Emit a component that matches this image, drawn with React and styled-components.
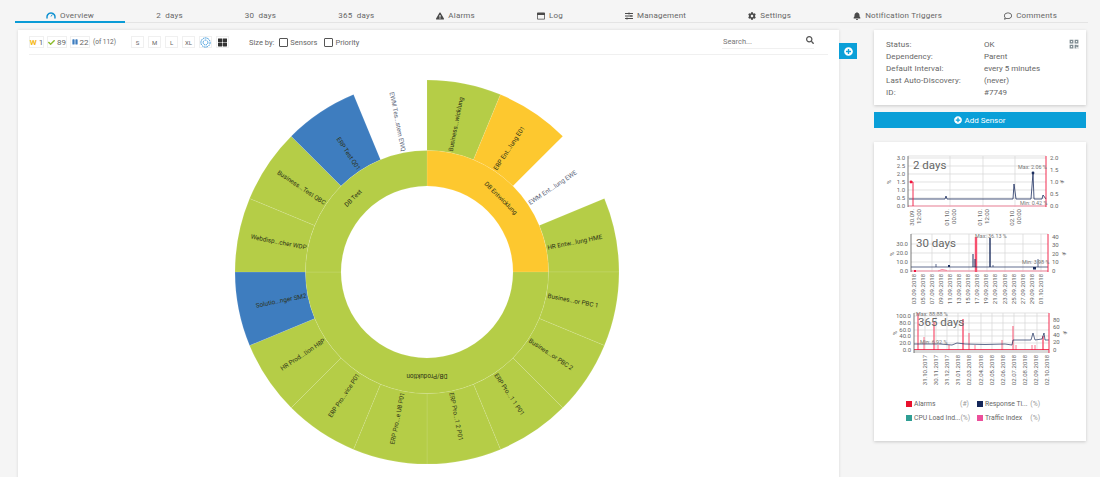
import React from 'react'
import styled, { createGlobalStyle } from 'styled-components'
import {
  FaExclamationTriangle,
  FaRegWindowMaximize,
  FaSlidersH,
  FaCog,
  FaBell,
  FaRegComment,
  FaSearch,
  FaPlusCircle,
  FaCheck,
  FaPause,
  FaThLarge,
  FaQrcode,
} from 'react-icons/fa'

const GlobalStyle = createGlobalStyle`
  html, body {
    margin: 0;
    background: #f5f5f5;
    font-family: Roboto, 'Liberation Sans', sans-serif;
  }
`

const Page = styled.div`
  width: 1100px;
  height: 477px;
  overflow: hidden;
  background: #f5f5f5;
`

const TabBar = styled.nav`
  display: flex;
  height: 22px;
  margin: 0 12px 0 15px;
  border-bottom: 1px solid #e4e4e4;
`

const Tab = styled.div`
  flex: 1 1 auto;
  display: flex;
  align-items: center;
  justify-content: center;
  gap: 4px;
  padding-top: 9px;
  height: 13px;
  font-size: 8px;
  letter-spacing: 0.2px;
  white-space: pre;
  color: #666;
  ${(p) => p.$active && 'border-bottom: 2px solid #0a9bd6; height: 12px;'}

  svg {
    font-size: 8px;
    color: #4a4a4a;
  }
`

const Content = styled.div`
  display: flex;
  align-items: flex-start;
  margin-top: 7px;
  padding-left: 18px;
`

const MainCard = styled.section`
  width: 821px;
  height: 520px;
  flex: none;
  background: #fff;
  box-shadow: 0 0 3px rgba(0, 0, 0, 0.12);
`

const Toolbar = styled.div`
  display: flex;
  align-items: center;
  height: 24px;
  margin: 0 11px;
  border-bottom: 1px solid #f0f0f0;
  font-size: 7.5px;
  color: #666;
`

const Badge = styled.span`
  display: flex;
  align-items: center;
  justify-content: center;
  gap: 2px;
  width: ${(p) => p.$w || 13}px;
  height: 12px;
  margin-right: ${(p) => p.$gap ?? 3}px;
  border: 1px solid #f0f0f0;
  font-size: ${(p) => p.$size || 7}px;
  color: #666;
  box-sizing: border-box;
`

const Count = styled.span`
  font-size: 8px;
  font-weight: ${(p) => (p.$bold ? 700 : 400)};
  color: ${(p) => p.$color || '#666'};
`

const OfTotal = styled.span`
  margin: 0 15px 0 3px;
  font-size: 6.5px;
  color: #666;
`

const SizeBy = styled.span`
  margin: 0 5px 0 20px;
`

const CheckLabel = styled.label`
  display: flex;
  align-items: center;
  gap: 2px;
  margin-right: 7px;
`

const Check = styled.input.attrs({ type: 'checkbox' })`
  appearance: none;
  width: 9px;
  height: 9px;
  margin: 0;
  border: 1px solid #555;
  border-radius: 1px;
  background: #fff;
`

const SearchBox = styled.div`
  display: flex;
  align-items: center;
  width: 92px;
  height: 13px;
  margin: 0 14px 0 auto;
  border-bottom: 1px solid #f0f0f0;

  svg {
    font-size: 8px;
    color: #555;
    margin-top: -3px;
  }
`

const SearchInput = styled.input`
  flex: 1;
  min-width: 0;
  padding: 0 0 0 1px;
  border: 0;
  outline: 0;
  background: transparent;
  font: 7.5px Roboto, sans-serif;

  &::placeholder {
    color: #777;
    opacity: 1;
  }
`

const Sunburst = styled.svg`
  display: block;
`

const SegmentLabel = styled.text`
  font-size: 6.3px;
  fill: ${(p) => (p.$light ? '#5a6478' : '#2d3216')};
`

const ToggleButton = styled.button`
  flex: none;
  display: flex;
  align-items: center;
  justify-content: center;
  width: 18px;
  height: 16px;
  margin-top: 13px;
  padding: 0;
  border: 0;
  background: #0a9fd8;
  color: #fff;
  font-size: 9px;
`

const SideColumn = styled.aside`
  flex: none;
  width: 212px;
  margin-left: 17px;
`

const InfoCard = styled.div`
  position: relative;
  height: 75px;
  padding: 8px 12px;
  box-sizing: border-box;
  background: #fff;
  box-shadow: 0 1px 3px rgba(0, 0, 0, 0.18);
  display: grid;
  grid-template-columns: 98px 1fr;
  grid-auto-rows: 12px;
  align-items: center;
  font-size: 8px;
  letter-spacing: 0.1px;
  color: #666;
`

const InfoValue = styled.span`
  letter-spacing: 0;
  white-space: nowrap;
`

const QrBadge = styled.span`
  position: absolute;
  top: 9px;
  right: 7px;
  font-size: 10px;
  line-height: 10px;
  color: #7d8a90;
`

const AddButton = styled.button`
  display: flex;
  align-items: center;
  justify-content: center;
  gap: 2px;
  width: 100%;
  height: 16px;
  margin-top: 7px;
  padding: 0;
  border: 0;
  background: #0a9fd8;
  color: #fff;
  font: 400 8px Roboto, sans-serif;
`

const GraphCard = styled.div`
  height: 299px;
  margin-top: 14px;
  padding-top: 9px;
  box-sizing: border-box;
  background: #fff;
  box-shadow: 0 1px 3px rgba(0, 0, 0, 0.18);
`

const ChartSvg = styled.svg`
  display: block;
  font-family: Roboto, sans-serif;
`

const Tick = styled.text`
  font-size: 6px;
  fill: #666;
`

const Note = styled.text`
  font-size: 5.4px;
  fill: #777;
`

const ChartTitle = styled.text`
  font-size: 11.5px;
  fill: #666;
`

const Legend = styled.div`
  display: grid;
  grid-template-columns: 71px 63px;
  grid-auto-rows: 14px;
  margin: 11px 0 0 32px;
  font-size: 6.8px;
  color: #666;
`

const LegendItem = styled.div`
  display: flex;
  align-items: center;
  white-space: nowrap;
`

const Swatch = styled.i`
  flex: none;
  width: 6px;
  height: 6px;
  margin-right: 2px;
  background: ${(p) => p.$color};
`

const LegendUnit = styled.span`
  margin-left: auto;
  margin-right: ${(p) => (p.$end ? 0 : 8)}px;
  color: #999;
`

// sunburst
const CX = 427
const CY = 272
const GREEN = '#b5cd47'
const YELLOW = '#fdc82f'
const BLUE = '#3e7dbf'

const polar = (r, deg) => {
  const a = (deg * Math.PI) / 180
  return [CX + r * Math.sin(a), CY - r * Math.cos(a)]
}

const arc = (r0, r1, from, to) => {
  const big = to - from > 180 ? 1 : 0
  const [x0, y0] = polar(r1, from)
  const [x1, y1] = polar(r1, to)
  const [x2, y2] = polar(r0, to)
  const [x3, y3] = polar(r0, from)
  return `M${x0} ${y0}A${r1} ${r1} 0 ${big} 1 ${x1} ${y1}L${x2} ${y2}A${r0} ${r0} 0 ${big} 0 ${x3} ${y3}Z`
}

const groups = [
  { name: 'DB Entwicklung', from: 0, to: 90, color: YELLOW, rot: 45 },
  { name: 'DB/Produktion', from: 90, to: 270, color: GREEN, rot: 180 },
  { name: 'DB Test', from: 270, to: 360, color: GREEN, rot: -45 },
]

const sensors = [
  ['Business...wicklung', GREEN],
  ['ERP Ent...lung E01', YELLOW],
  ['EWM Ent...lung EWE', null],
  ['HR Entw...lung HME', GREEN],
  ['Busines...or PBC 1', GREEN],
  ['Busines...or PBC 2', GREEN],
  ['ERP Pro...1 1 P01', GREEN],
  ['ERP Pro...1 2 P01', GREEN],
  ['ERP Pro...e U8 P01', GREEN],
  ['ERP Pro...vice P01', GREEN],
  ['HR Prod...tion H8P', GREEN],
  ['Solutio...nger SM2', BLUE],
  ['Webdisp...cher WDP', GREEN],
  ['Business...Test QBC', GREEN],
  ['ERP Test Q01', BLUE],
  ['EWM Tes...stem EWQ', null],
]

const SunburstChart = () => (
  <Sunburst width="821" height="422" viewBox="18 55 821 422">
    {sensors.map(([name, color], i) => {
      const from = i * 22.5
      const mid = from + 11.25
      const [x, y] = polar(123, mid)
      const right = mid < 180
      return (
        <g key={name}>
          {color && (
            <path d={arc(121.5, 192, from, from + 22.5)} fill={color} stroke="#fff" strokeOpacity="0.14" strokeWidth="0.7" />
          )}
          <SegmentLabel
            $light={!color}
            transform={`translate(${x} ${y}) rotate(${right ? mid - 90 : mid + 90})`}
            textAnchor={right ? 'start' : 'end'}
            dominantBaseline="middle"
          >
            {name}
          </SegmentLabel>
        </g>
      )
    })}
    {groups.map((g) => {
      const [x, y] = polar(104, (g.from + g.to) / 2)
      return (
        <g key={g.name}>
          <path d={arc(86, 121.5, g.from, g.to)} fill={g.color} stroke="#fff" strokeOpacity="0.14" strokeWidth="0.7" />
          <SegmentLabel
            transform={`translate(${x} ${y}) rotate(${g.rot})`}
            textAnchor="middle"
            dominantBaseline="middle"
          >
            {g.name}
          </SegmentLabel>
        </g>
      )
    })}
  </Sunburst>
)

// small graphs, drawn in page coordinates through the viewBox
const NAVY = '#1d2f5f'
const RED = '#f0143c'

const spikes = (list, base) =>
  list.map(([x, top, w = 1]) => <line key={x} x1={x} x2={x} y1={base} y2={top} strokeWidth={w} />)

const Graph = ({ view, plot, left, right, xs, xLines, title, notes, unitY, children }) => {
  const [x0, y0, x1, y1] = plot
  return (
    <ChartSvg width="212" height={view[1]} viewBox={`874 ${view[0]} 212 ${view[1]}`}>
      {left.map(([, y]) => (
        <line key={y} x1={x0} x2={x1} y1={y} y2={y} stroke="#d6d6d6" strokeWidth="0.7" />
      ))}
      <line x1={x0} x2={x1} y1={y0} y2={y0} stroke="#d6d6d6" strokeWidth="0.7" />
      {xLines.map((x) => (
        <line key={x} x1={x} x2={x} y1={y0} y2={y1} stroke="#d6d6d6" strokeWidth="0.7" />
      ))}
      {children}
      <line x1={x0} x2={x0} y1={y0} y2={y1} stroke="#555" strokeWidth="0.8" />
      <line x1={x1} x2={x1} y1={y0} y2={y1} stroke={RED} strokeWidth="0.9" />
      {left.map(([label, y]) => (
        <Tick key={label} x={x0 - 3} y={y + 2} textAnchor="end">
          {label}
        </Tick>
      ))}
      {right.map(([label, y]) => (
        <Tick key={label} x={x1 + 4} y={y + 2}>
          {label}
        </Tick>
      ))}
      <Tick transform={`translate(${x0 - 17} ${unitY}) rotate(-90)`} textAnchor="middle">%</Tick>
      <Tick transform={`translate(${x1 + 18} ${unitY}) rotate(-90)`} textAnchor="middle">#</Tick>
      {xs.map(([x, lines]) =>
        lines.map((t, i) => (
          <Tick
            key={t + i + x}
            transform={`translate(${x + 2 + i * 7} ${y1 + 2}) rotate(-90)`}
            textAnchor="end"
          >
            {t}
          </Tick>
        ))
      )}
      <ChartTitle x={title[1]} y={title[2]}>
        {title[0]}
      </ChartTitle>
      {notes.map(([t, x, y]) => (
        <Note key={t} x={x} y={y}>
          {t}
        </Note>
      ))}
    </ChartSvg>
  )
}

const Graph2Days = () => (
  <Graph
    view={[151, 82]}
    plot={[908, 156, 1046, 207]}
    left={[['3.0', 158], ['2.5', 166], ['2.0', 174], ['1.5', 182], ['1.0', 190], ['0.5', 198], ['0.0', 206]]}
    right={[['2.0', 158], ['1.5', 170], ['1.0', 182], ['0.5', 194], ['0.0', 206]]}
    xLines={[950, 983, 1015]}
    xs={[[912, ['30.09.', '12:00']], [947, ['01.10.', '00:00']], [980, ['01.10.', '12:00']], [1012, ['02.10.', '00:00']]]}
    title={['2 days', 913, 169]}
    notes={[['Max: 2.06 %', 1018, 169], ['Min: 0.42 %', 1020, 205]]}
    unitY={182}
  >
    <line x1="908" x2="1046" y1="206" y2="206" stroke="#f58aa0" strokeWidth="1" />
    <polyline
      points="909,199 945,199 946,196 947,199 1013,199 1014,184 1016,199 1031,199 1033,173 1034,199 1042,199 1043,195 1046,199"
      fill="none"
      stroke={NAVY}
      strokeWidth="0.8"
    />
    <circle cx="1033" cy="173" r="1.4" fill={NAVY} />
    <polyline points="910,182 913,182 913,206" fill="none" stroke={RED} strokeWidth="0.9" />
    <circle cx="911" cy="182" r="1.4" fill={RED} />
  </Graph>
)

const days30 = ['03.09', '05.09', '07.09', '09.09', '11.09', '13.09', '15.09', '17.09', '19.09', '21.09', '23.09', '25.09', '27.09', '29.09']

const Graph30Days = () => (
  <Graph
    view={[233, 73]}
    plot={[911, 234, 1048, 272]}
    left={[['30.0', 244], ['20.0', 253], ['10.0', 262], ['0.0', 271]]}
    right={[['40', 237], ['30', 245], ['20', 254], ['10', 262], ['0', 271]]}
    xLines={[932, 950, 969, 987, 1005, 1023, 1041]}
    xs={[...days30.map((d, i) => [913.5 + i * 9.1, [`${d}.2018`]]), [1041, ['01.10.2018']]]}
    title={['30 days', 916, 247]}
    notes={[['Max: 36.13 %', 975, 238], ['Min: 3.98 %', 1022, 264]]}
    unitY={254}
  >
    <line x1="911" x2="1048" y1="271" y2="271" stroke="#f58aa0" strokeWidth="1" />
    <polyline points="938,271 942,269.5 947,270.5" fill="none" stroke="#f58aa0" strokeWidth="1" />
    <g stroke="#f7506e">{spikes([[976, 237, 2.4]], 272)}</g>
    <line x1="911" x2="1048" y1="267" y2="267" stroke={NAVY} strokeWidth="0.7" />
    <g stroke={NAVY}>
      {spikes([[936, 264, 0.7], [949, 265, 2], [973, 254, 1], [975, 259, 1], [990, 238, 1.4], [993, 265, 0.7], [1038, 259, 0.7]], 267)}
    </g>
    <rect x="1033" y="267" width="3" height="2.5" fill={NAVY} />
    <rect x="914" y="270" width="2" height="2" fill={RED} />
  </Graph>
)

const year = ['31.10.2017', '30.11.2017', '31.12.2017', '31.01.2018', '02.03.2018', '02.04.2018', '02.05.2018', '02.06.2018', '02.07.2018', '02.08.2018', '02.09.2018', '02.10.2018']

const Graph365Days = () => (
  <Graph
    view={[306, 80]}
    plot={[914, 313, 1049, 353]}
    left={[['100.0', 316], ['80.0', 323], ['60.0', 330], ['40.0', 336], ['20.0', 343], ['0.0', 350]]}
    right={[['80', 320], ['60', 327], ['40', 335], ['20', 342], ['0', 350]]}
    xLines={[925, 936, 947, 958, 969, 981, 992, 1003, 1014, 1025, 1037]}
    xs={year.map((d, i) => [925 + i * 11.1, [d]])}
    title={['365 days', 918, 326]}
    notes={[['Max: 88.88 %', 916, 316], ['Min: 6.92 %', 920, 344]]}
    unitY={333}
  >
    <rect x="914" y="350" width="135" height="3" fill="#d8d8d8" />
    <g stroke="#f7506e">
      {spikes(
        [[918, 313, 1.2], [924, 337, 0.8], [934, 322, 1.2], [938, 345, 0.8], [949, 345, 0.8], [963, 319, 1.4], [969, 333, 0.9], [975, 345, 0.7], [1002, 340, 0.8], [1013, 326, 1], [1016, 345, 0.8], [1032, 345, 0.8], [1035, 345, 0.8], [1043, 336, 1.4]],
        350
      )}
    </g>
    <line x1="914" x2="1049" y1="349.5" y2="349.5" stroke={RED} strokeWidth="0.8" />
    <polyline
      points="914,344 940,344 952,345 957,343 965,344 985,344.5 1005,344 1012,345 1013,340 1031,340 1033,333 1035,340 1042,339 1044,333 1045,340 1049,340"
      fill="none"
      stroke={NAVY}
      strokeWidth="0.7"
    />
  </Graph>
)

const GaugeIcon = () => (
  <svg width="10" height="9" viewBox="0 0 10 9">
    <path d="M1.3 7.5A4 4 0 1 1 8.7 7.5" fill="none" stroke="#0a8fd0" strokeWidth="1.4" />
    <path d="M5 5.5L6.4 3.4" stroke="#0a8fd0" strokeWidth="0.9" />
  </svg>
)

const SunburstIcon = () => (
  <svg width="11" height="11" viewBox="0 0 11 11" fill="none" stroke="#2b8fd8">
    <circle cx="5.5" cy="5.5" r="4.6" strokeDasharray="1.6 0.7" />
    <circle cx="5.5" cy="5.5" r="2.4" strokeDasharray="1.3 0.6" />
  </svg>
)

const tabs = [
  { label: 'Overview', icon: <GaugeIcon />, active: true },
  { label: '2  days' },
  { label: '30  days' },
  { label: '365  days' },
  { label: 'Alarms', icon: <FaExclamationTriangle /> },
  { label: 'Log', icon: <FaRegWindowMaximize /> },
  { label: 'Management', icon: <FaSlidersH /> },
  { label: 'Settings', icon: <FaCog /> },
  { label: 'Notification Triggers', icon: <FaBell /> },
  { label: 'Comments', icon: <FaRegComment /> },
]

const info = [
  ['Status:', 'OK'],
  ['Dependency:', 'Parent'],
  ['Default Interval:', 'every 5 minutes'],
  ['Last Auto-Discovery:', '(never)'],
  ['ID:', '#7749'],
]

export default function App() {
  return (
    <Page>
      <GlobalStyle />
      <TabBar>
        {tabs.map((t) => (
          <Tab key={t.label} $active={t.active}>
            {t.icon}
            {t.label}
          </Tab>
        ))}
      </TabBar>
      <Content>
        <MainCard>
          <Toolbar>
            <Badge $w={15}>
              <Count $bold $color="#f5b921">W</Count>
              <Count>1</Count>
            </Badge>
            <Badge $w={20}>
              <FaCheck color="#8dbb2c" size={7} />
              <Count>89</Count>
            </Badge>
            <Badge $w={20} $gap={0}>
              <FaPause color="#3e7dbf" size={6} />
              <Count>22</Count>
            </Badge>
            <OfTotal>(of 112)</OfTotal>
            {['S', 'M', 'L', 'XL'].map((s) => (
              <Badge key={s} $size={6} $gap={4}>
                {s}
              </Badge>
            ))}
            <Badge $gap={4}>
              <SunburstIcon />
            </Badge>
            <Badge $gap={0}>
              <FaThLarge color="#333" size={9} />
            </Badge>
            <SizeBy>Size by:</SizeBy>
            <CheckLabel>
              <Check />
              Sensors
            </CheckLabel>
            <CheckLabel>
              <Check />
              Priority
            </CheckLabel>
            <SearchBox>
              <SearchInput placeholder="Search..." />
              <FaSearch />
            </SearchBox>
          </Toolbar>
          <SunburstChart />
        </MainCard>
        <ToggleButton>
          <FaPlusCircle />
        </ToggleButton>
        <SideColumn>
          <InfoCard>
            <QrBadge>
              <FaQrcode />
            </QrBadge>
            {info.map(([k, v]) => (
              <React.Fragment key={k}>
                <span>{k}</span>
                <InfoValue>{v}</InfoValue>
              </React.Fragment>
            ))}
          </InfoCard>
          <AddButton>
            <FaPlusCircle />
            Add Sensor
          </AddButton>
          <GraphCard>
            <Graph2Days />
            <Graph30Days />
            <Graph365Days />
            <Legend>
              <LegendItem>
                <Swatch $color="#e8112d" />
                Alarms
                <LegendUnit>(#)</LegendUnit>
              </LegendItem>
              <LegendItem>
                <Swatch $color="#14275a" />
                Response Ti...
                <LegendUnit $end>(%)</LegendUnit>
              </LegendItem>
              <LegendItem>
                <Swatch $color="#2f9e94" />
                CPU Load Ind...
                <LegendUnit>(%)</LegendUnit>
              </LegendItem>
              <LegendItem>
                <Swatch $color="#ec4f9b" />
                Traffic Index
                <LegendUnit $end>(%)</LegendUnit>
              </LegendItem>
            </Legend>
          </GraphCard>
        </SideColumn>
      </Content>
    </Page>
  )
}
